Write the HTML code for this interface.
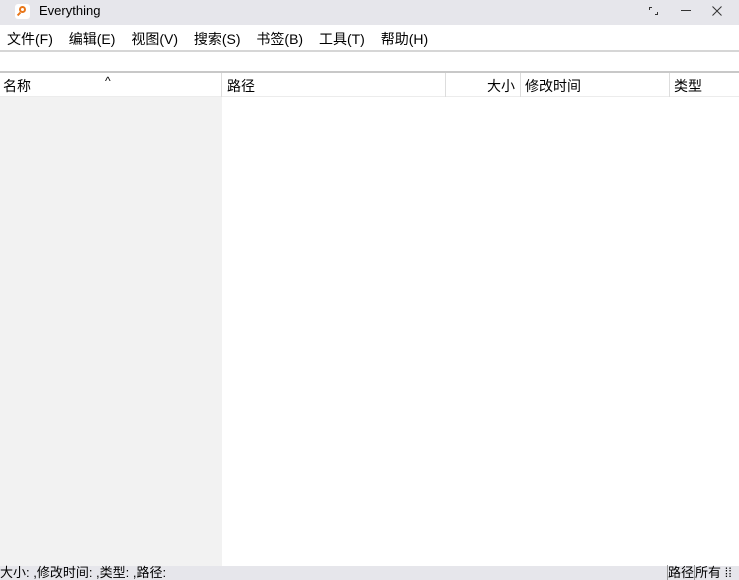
<!DOCTYPE html><html><head><style>
body{margin:0;width:739px;height:580px;position:relative;overflow:hidden;background:#fff;font-family:"Liberation Sans","Noto Sans CJK SC",sans-serif;font-size:14px;color:#000}
div{position:absolute;box-sizing:border-box}
.t{white-space:nowrap}
</style></head><body>
<div style="left:0;top:0;width:739px;height:25px;background:#e6e6eb"></div>
<div style="left:15px;top:4px;width:15px;height:15px;background:#fff;border-radius:3px"><div style="left:4px;top:2px;width:7px;height:7px;border:2px solid #e8761a;border-radius:50%"></div><div style="left:2px;top:9px;width:4px;height:2px;background:#e8761a;transform:rotate(-45deg)"></div></div>
<div class="t" style="left:39px;top:3px;font-size:13px">Everything</div>
<div style="left:649px;top:7px;width:3px;height:3px;border-left:1px solid #333;border-top:1px solid #333"></div>
<div style="left:655px;top:12px;width:3px;height:3px;border-right:1px solid #333;border-bottom:1px solid #333"></div>
<div style="left:681px;top:10px;width:10px;height:1px;background:#333"></div>
<svg style="position:absolute;left:712px;top:6px" width="10" height="10"><path d="M0.5 0.5L9.5 9.5M9.5 0.5L0.5 9.5" stroke="#333" stroke-width="1"/></svg>
<div class="t" style="left:7px;top:29px;word-spacing:12px">文件(F) 编辑(E) 视图(V) 搜索(S) 书签(B) 工具(T) 帮助(H)</div>
<div style="left:0;top:50px;width:739px;height:2px;background:#d6d6d6"></div>
<div style="left:0;top:71px;width:739px;height:2px;background:#c8c8c8"></div>
<div style="left:0;top:97px;width:222px;height:469px;background:#f2f2f2"></div>
<div style="left:0;top:96px;width:739px;height:1px;background:#ececec"></div>
<div style="left:221px;top:73px;width:1px;height:24px;background:#ddd"></div>
<div style="left:445px;top:73px;width:1px;height:24px;background:#ddd"></div>
<div style="left:520px;top:73px;width:1px;height:24px;background:#ddd"></div>
<div style="left:669px;top:73px;width:1px;height:24px;background:#ddd"></div>
<div class="t" style="left:3px;top:76px">名称</div>
<div class="t" style="left:105px;top:74px;font-size:12px">^</div>
<div class="t" style="left:227px;top:76px">路径</div>
<div class="t" style="left:487px;top:76px">大小</div>
<div class="t" style="left:525px;top:76px">修改时间</div>
<div class="t" style="left:674px;top:76px">类型</div>
<div style="left:0;top:566px;width:739px;height:14px;background:#e6e6eb"></div>
<div class="t" style="left:0;top:565px;font-size:13px;line-height:15px">大小: ,修改时间: ,类型: ,路径:</div>
<div class="t" style="left:667px;top:565px;font-size:13px;line-height:15px;border-left:1px solid #999">路径<span style="border-left:1px solid #999">所有</span> ⁞⁞</div>
</body></html>
